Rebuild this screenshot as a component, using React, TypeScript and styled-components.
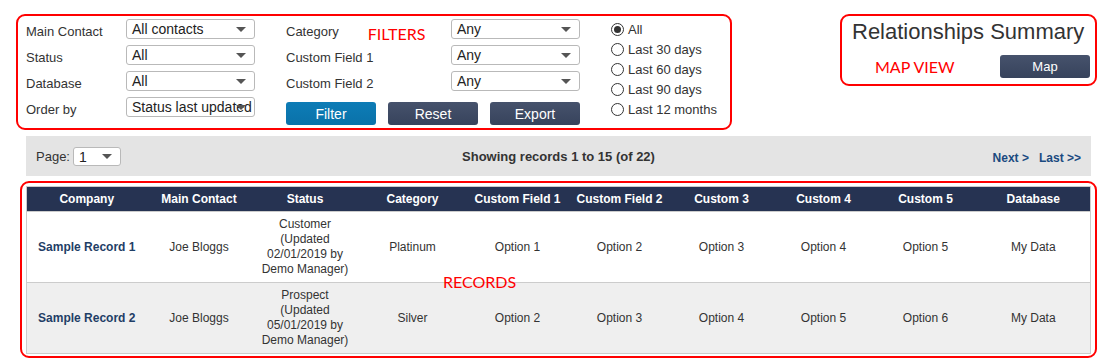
import React from "react";
import styled, { createGlobalStyle } from "styled-components";

const GlobalStyle = createGlobalStyle`
  html, body {
    margin: 0;
    padding: 0;
    background: #fff;
  }
  body {
    font-family: "Liberation Sans", Arial, sans-serif;
    color: #333;
  }
`;

const Page = styled.div`
  width: 1118px;
  box-sizing: border-box;
  padding: 14px 21px 0 16px;
`;

const TopRow = styled.div`
  display: flex;
  justify-content: space-between;
  align-items: flex-start;
`;

// red annotation outline drawn round a region of the screenshot
const Annotated = styled.div`
  border: 2px solid #f00;
  border-radius: 9px;
  box-sizing: border-box;
`;

const Note = styled.span`
  font-family: Lato, "Open Sans", sans-serif;
  font-size: 16px;
  line-height: 19px;
  color: #f00;
`;

const FilterPanel = styled(Annotated)`
  width: 716px;
  height: 116px;
  padding: 3px 0 0 8px;
  display: flex;
  gap: 31px;
`;

const FieldGrid = styled.div<{ $label: number }>`
  display: grid;
  grid-template-columns: ${(p) => p.$label}px 129px;
  grid-auto-rows: 20px;
  row-gap: 6px;
`;

const FieldLabel = styled.div`
  display: flex;
  gap: 29px;
  font-size: 13px;
  line-height: 15px;
  padding-top: 5px;
  white-space: nowrap;
`;

const SelectBox = styled.div<{ $width?: number; $height?: number }>`
  position: relative;
  width: ${(p) => p.$width ?? 129}px;
  height: ${(p) => p.$height ?? 20}px;
  box-sizing: border-box;
  border: 1px solid #b9b9b9;
  border-radius: 3px;
  background: #fff;
  padding: 1px 0 0 5px;
  font-size: 14px;
  line-height: ${(p) => (p.$height ?? 20) - 3}px;
  color: #222;
  white-space: nowrap;
  overflow: hidden;
`;

const Caret = styled.span`
  position: absolute;
  right: 8px;
  top: 50%;
  margin-top: -2px;
  width: 0;
  height: 0;
  border-left: 5px solid transparent;
  border-right: 5px solid transparent;
  border-top: 5px solid #555;
`;

const ButtonRow = styled.div`
  grid-column: 1 / span 2;
  display: flex;
  justify-content: space-between;
  margin-top: 5px;
`;

const Button = styled.button<{ $primary?: boolean }>`
  width: 90px;
  height: 23px;
  border: none;
  border-radius: 3px;
  padding: 0;
  font-family: "Liberation Sans", Arial, sans-serif;
  font-size: 14px;
  color: #fff;
  background: ${(p) =>
    p.$primary
      ? "linear-gradient(#0d7cb6, #0a72a9)"
      : "linear-gradient(#46526c, #37435c)"};
`;

const RadioList = styled.div`
  display: flex;
  flex-direction: column;
`;

const RadioItem = styled.label`
  display: flex;
  align-items: center;
  gap: 4px;
  height: 20px;
  font-size: 13px;
  color: #333;
`;

const RadioMark = styled.span<{ $checked?: boolean }>`
  width: 11px;
  height: 11px;
  border: 1px solid #333;
  border-radius: 50%;
  display: flex;
  align-items: center;
  justify-content: center;
  background: #fff;
  &::after {
    content: "";
    width: 7px;
    height: 7px;
    border-radius: 50%;
    background: ${(p) => (p.$checked ? "#333" : "transparent")};
  }
`;

const MapPanel = styled(Annotated)`
  width: 257px;
  height: 72px;
  padding: 3px 5px 0 10px;
`;

const Title = styled.div`
  font-size: 22px;
  line-height: 25px;
  color: #333;
  white-space: nowrap;
`;

const MapRow = styled.div`
  display: flex;
  justify-content: space-between;
  align-items: center;
  margin-top: 11px;
  padding-left: 23px;
`;

const MapButton = styled(Button)`
  font-size: 13px;
`;

const Pager = styled.div`
  margin: 6px 6px 0 10px;
  height: 40px;
  background: #e4e4e4;
  padding: 0 10px;
  display: grid;
  grid-template-columns: 1fr auto 1fr;
  align-items: center;
`;

const PageSelect = styled.div`
  display: flex;
  align-items: center;
  gap: 3px;
  font-size: 13px;
`;

const Showing = styled.div`
  font-size: 13px;
  font-weight: bold;
  color: #333;
`;

const PagerLinks = styled.div`
  display: flex;
  justify-content: flex-end;
  gap: 10px;
  padding-top: 3px;
`;

const PagerLink = styled.a`
  font-size: 12px;
  font-weight: bold;
  color: #1a4a80;
  text-decoration: none;
`;

const RecordsPanel = styled(Annotated)`
  position: relative;
  margin: 5px 0 0 4px;
  padding: 3px 4px 2px 4px;
`;

const RecordsNote = styled(Note)`
  position: absolute;
  left: 421px;
  top: 89px;
`;

const Table = styled.table`
  width: 100%;
  table-layout: fixed;
  border-collapse: collapse;
  border: 1px solid #ccc;
  font-size: 12px;
`;

const Th = styled.th`
  height: 24px;
  padding: 0 4px;
  background: #263352;
  color: #fff;
  font-weight: bold;
  text-align: center;
  white-space: nowrap;
`;

const Tr = styled.tr<{ $alt?: boolean }>`
  background: ${(p) => (p.$alt ? "#efefef" : "#fff")};
`;

const Td = styled.td<{ $link?: boolean }>`
  padding: 5px 5px;
  line-height: 15px;
  border-top: 1px solid #ccc;
  text-align: center;
  vertical-align: middle;
  color: ${(p) => (p.$link ? "#1f3e66" : "#333")};
  font-weight: ${(p) => (p.$link ? "bold" : "normal")};
`;

const columns = [
  { title: "Company", width: 120 },
  { title: "Main Contact", width: 105 },
  { title: "Status", width: 107 },
  { title: "Category", width: 108 },
  { title: "Custom Field 1", width: 102 },
  { title: "Custom Field 2", width: 102 },
  { title: "Custom 3", width: 102 },
  { title: "Custom 4", width: 102 },
  { title: "Custom 5", width: 102 },
  { title: "Database", width: 114 },
];

const records = [
  {
    company: "Sample Record 1",
    contact: "Joe Bloggs",
    status: "Customer (Updated 02/01/2019 by Demo Manager)",
    category: "Platinum",
    custom: ["Option 1", "Option 2", "Option 3", "Option 4", "Option 5"],
    database: "My Data",
  },
  {
    company: "Sample Record 2",
    contact: "Joe Bloggs",
    status: "Prospect (Updated 05/01/2019 by Demo Manager)",
    category: "Silver",
    custom: ["Option 2", "Option 3", "Option 4", "Option 5", "Option 6"],
    database: "My Data",
  },
];

const ranges = ["All", "Last 30 days", "Last 60 days", "Last 90 days", "Last 12 months"];

function Select({ value }: { value: string }) {
  return (
    <SelectBox>
      {value}
      <Caret />
    </SelectBox>
  );
}

export default function App() {
  return (
    <>
      <GlobalStyle />
      <Page>
        <TopRow>
          <FilterPanel>
            <FieldGrid $label={100}>
              <FieldLabel>Main Contact</FieldLabel>
              <Select value="All contacts" />
              <FieldLabel>Status</FieldLabel>
              <Select value="All" />
              <FieldLabel>Database</FieldLabel>
              <Select value="All" />
              <FieldLabel>Order by</FieldLabel>
              <Select value="Status last updated" />
            </FieldGrid>

            <FieldGrid $label={165}>
              <FieldLabel>
                Category <Note>FILTERS</Note>
              </FieldLabel>
              <Select value="Any" />
              <FieldLabel>Custom Field 1</FieldLabel>
              <Select value="Any" />
              <FieldLabel>Custom Field 2</FieldLabel>
              <Select value="Any" />
              <ButtonRow>
                <Button $primary>Filter</Button>
                <Button>Reset</Button>
                <Button>Export</Button>
              </ButtonRow>
            </FieldGrid>

            <RadioList>
              {ranges.map((r, i) => (
                <RadioItem key={r}>
                  <RadioMark $checked={i === 0} />
                  {r}
                </RadioItem>
              ))}
            </RadioList>
          </FilterPanel>

          <MapPanel>
            <Title>Relationships Summary</Title>
            <MapRow>
              <Note>MAP VIEW</Note>
              <MapButton>Map</MapButton>
            </MapRow>
          </MapPanel>
        </TopRow>

        <Pager>
          <PageSelect>
            Page:
            <SelectBox $width={48} $height={19}>
              1
              <Caret />
            </SelectBox>
          </PageSelect>
          <Showing>Showing records 1 to 15 (of 22)</Showing>
          <PagerLinks>
            <PagerLink href="#">Next &gt;</PagerLink>
            <PagerLink href="#">Last &gt;&gt;</PagerLink>
          </PagerLinks>
        </Pager>

        <RecordsPanel>
          <Table>
            <colgroup>
              {columns.map((c) => (
                <col key={c.title} style={{ width: c.width }} />
              ))}
            </colgroup>
            <thead>
              <tr>
                {columns.map((c) => (
                  <Th key={c.title}>{c.title}</Th>
                ))}
              </tr>
            </thead>
            <tbody>
              {records.map((r, i) => (
                <Tr key={r.company} $alt={i % 2 === 1}>
                  <Td $link>{r.company}</Td>
                  <Td>{r.contact}</Td>
                  <Td>{r.status}</Td>
                  <Td>{r.category}</Td>
                  {r.custom.map((v, j) => (
                    <Td key={j}>{v}</Td>
                  ))}
                  <Td>{r.database}</Td>
                </Tr>
              ))}
            </tbody>
          </Table>
          <RecordsNote>RECORDS</RecordsNote>
        </RecordsPanel>
      </Page>
    </>
  );
}
